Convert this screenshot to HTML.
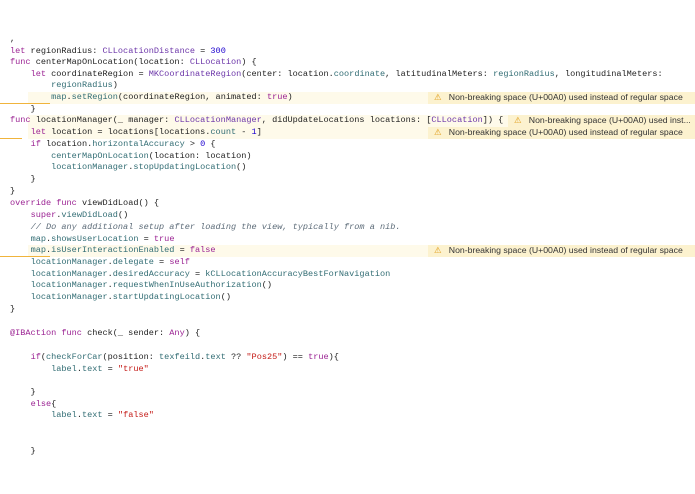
<!DOCTYPE html><html><head><meta charset="utf-8"><style>
body{margin:0;width:695px;height:494px;background:#fff;overflow:hidden;position:relative;font-family:"Liberation Mono",monospace;font-size:8.57px;color:#1f1f1f}
.l{position:absolute;left:10px;height:11.7px;line-height:11.7px;white-space:pre;margin-top:1px}
.hl{position:absolute;left:28px;right:0;height:11.7px;background:#fefaea;margin-top:1px}
.ul{position:absolute;left:0;width:50px;height:1px;background:#f0b43c;margin-top:1px}
.w{position:absolute;height:11.7px;line-height:11.7px;background:#fcf2cf;font-family:"Liberation Sans",sans-serif;font-size:8.7px;color:#333;padding-left:6px;right:0;white-space:nowrap;overflow:hidden;margin-top:1px}
.w b{font-weight:normal;color:#e0a020;margin-right:7px}
.k{color:#9b2393}.t{color:#6c36a9}.m{color:#326d74}.n{color:#1c00cf}.s{color:#c41a16}.c{color:#5d6c79;font-style:italic}
</style></head><body>
<div class="hl" style="top:91px"></div><div class="ul" style="top:102px"></div>
<div class="hl" style="top:114px"></div>
<div class="hl" style="top:126px"></div><div class="ul" style="top:137px;width:22px"></div>
<div class="hl" style="top:244px"></div><div class="ul" style="top:255px"></div>
<div class="w" style="top:91px;left:428px"><b>⚠</b>Non-breaking space (U+00A0) used instead of regular space</div>
<div class="w" style="top:114px;left:508px"><b>⚠</b>Non-breaking space (U+00A0) used inst...</div>
<div class="w" style="top:126px;left:428px"><b>⚠</b>Non-breaking space (U+00A0) used instead of regular space</div>
<div class="w" style="top:244px;left:428px"><b>⚠</b>Non-breaking space (U+00A0) used instead of regular space</div>
<div class="l" style="top:33px">,</div>
<div class="l" style="top:44.5px"><span class="k">let</span> regionRadius: <span class="t">CLLocationDistance</span> = <span class="n">300</span></div>
<div class="l" style="top:56px"><span class="k">func</span> centerMapOnLocation(location: <span class="t">CLLocation</span>) {</div>
<div class="l" style="top:67.5px">    <span class="k">let</span> coordinateRegion = <span class="t">MKCoordinateRegion</span>(center: location.<span class="m">coordinate</span>, latitudinalMeters: <span class="m">regionRadius</span>, longitudinalMeters:</div>
<div class="l" style="top:79px">        <span class="m">regionRadius</span>)</div>
<div class="l" style="top:91px">        <span class="m">map</span>.<span class="m">setRegion</span>(coordinateRegion, animated: <span class="k">true</span>)</div>
<div class="l" style="top:102.5px">    }</div>
<div class="l" style="top:114px"><span class="k">func</span> locationManager(_ manager: <span class="t">CLLocationManager</span>, didUpdateLocations locations: [<span class="t">CLLocation</span>]) {</div>
<div class="l" style="top:126px">    <span class="k">let</span> location = locations[locations.<span class="m">count</span> - <span class="n">1</span>]</div>
<div class="l" style="top:138px">    <span class="k">if</span> location.<span class="m">horizontalAccuracy</span> &gt; <span class="n">0</span> {</div>
<div class="l" style="top:150px">        <span class="m">centerMapOnLocation</span>(location: location)</div>
<div class="l" style="top:161px">        <span class="m">locationManager</span>.<span class="m">stopUpdatingLocation</span>()</div>
<div class="l" style="top:173px">    }</div>
<div class="l" style="top:184.5px">}</div>
<div class="l" style="top:197px"><span class="k">override func</span> viewDidLoad() {</div>
<div class="l" style="top:209px">    <span class="k">super</span>.<span class="m">viewDidLoad</span>()</div>
<div class="l" style="top:221px">    <span class="c">// Do any additional setup after loading the view, typically from a nib.</span></div>
<div class="l" style="top:232.5px">    <span class="m">map</span>.<span class="m">showsUserLocation</span> = <span class="k">true</span></div>
<div class="l" style="top:244px">    <span class="m">map</span>.<span class="m">isUserInteractionEnabled</span> = <span class="k">false</span></div>
<div class="l" style="top:256px">    <span class="m">locationManager</span>.<span class="m">delegate</span> = <span class="k">self</span></div>
<div class="l" style="top:267.5px">    <span class="m">locationManager</span>.<span class="m">desiredAccuracy</span> = <span class="m">kCLLocationAccuracyBestForNavigation</span></div>
<div class="l" style="top:279px">    <span class="m">locationManager</span>.<span class="m">requestWhenInUseAuthorization</span>()</div>
<div class="l" style="top:291px">    <span class="m">locationManager</span>.<span class="m">startUpdatingLocation</span>()</div>
<div class="l" style="top:303px">}</div>
<div class="l" style="top:327px"><span class="k">@IBAction func</span> check(_ sender: <span class="k">Any</span>) {</div>
<div class="l" style="top:351px">    <span class="k">if</span>(<span class="m">checkForCar</span>(position: <span class="m">texfeild</span>.<span class="m">text</span> ?? <span class="s">"Pos25"</span>) == <span class="k">true</span>){</div>
<div class="l" style="top:362.5px">        <span class="m">label</span>.<span class="m">text</span> = <span class="s">"true"</span></div>
<div class="l" style="top:386px">    }</div>
<div class="l" style="top:397.5px">    <span class="k">else</span>{</div>
<div class="l" style="top:409px">        <span class="m">label</span>.<span class="m">text</span> = <span class="s">"false"</span></div>
<div class="l" style="top:445px">    }</div>
</body></html>
